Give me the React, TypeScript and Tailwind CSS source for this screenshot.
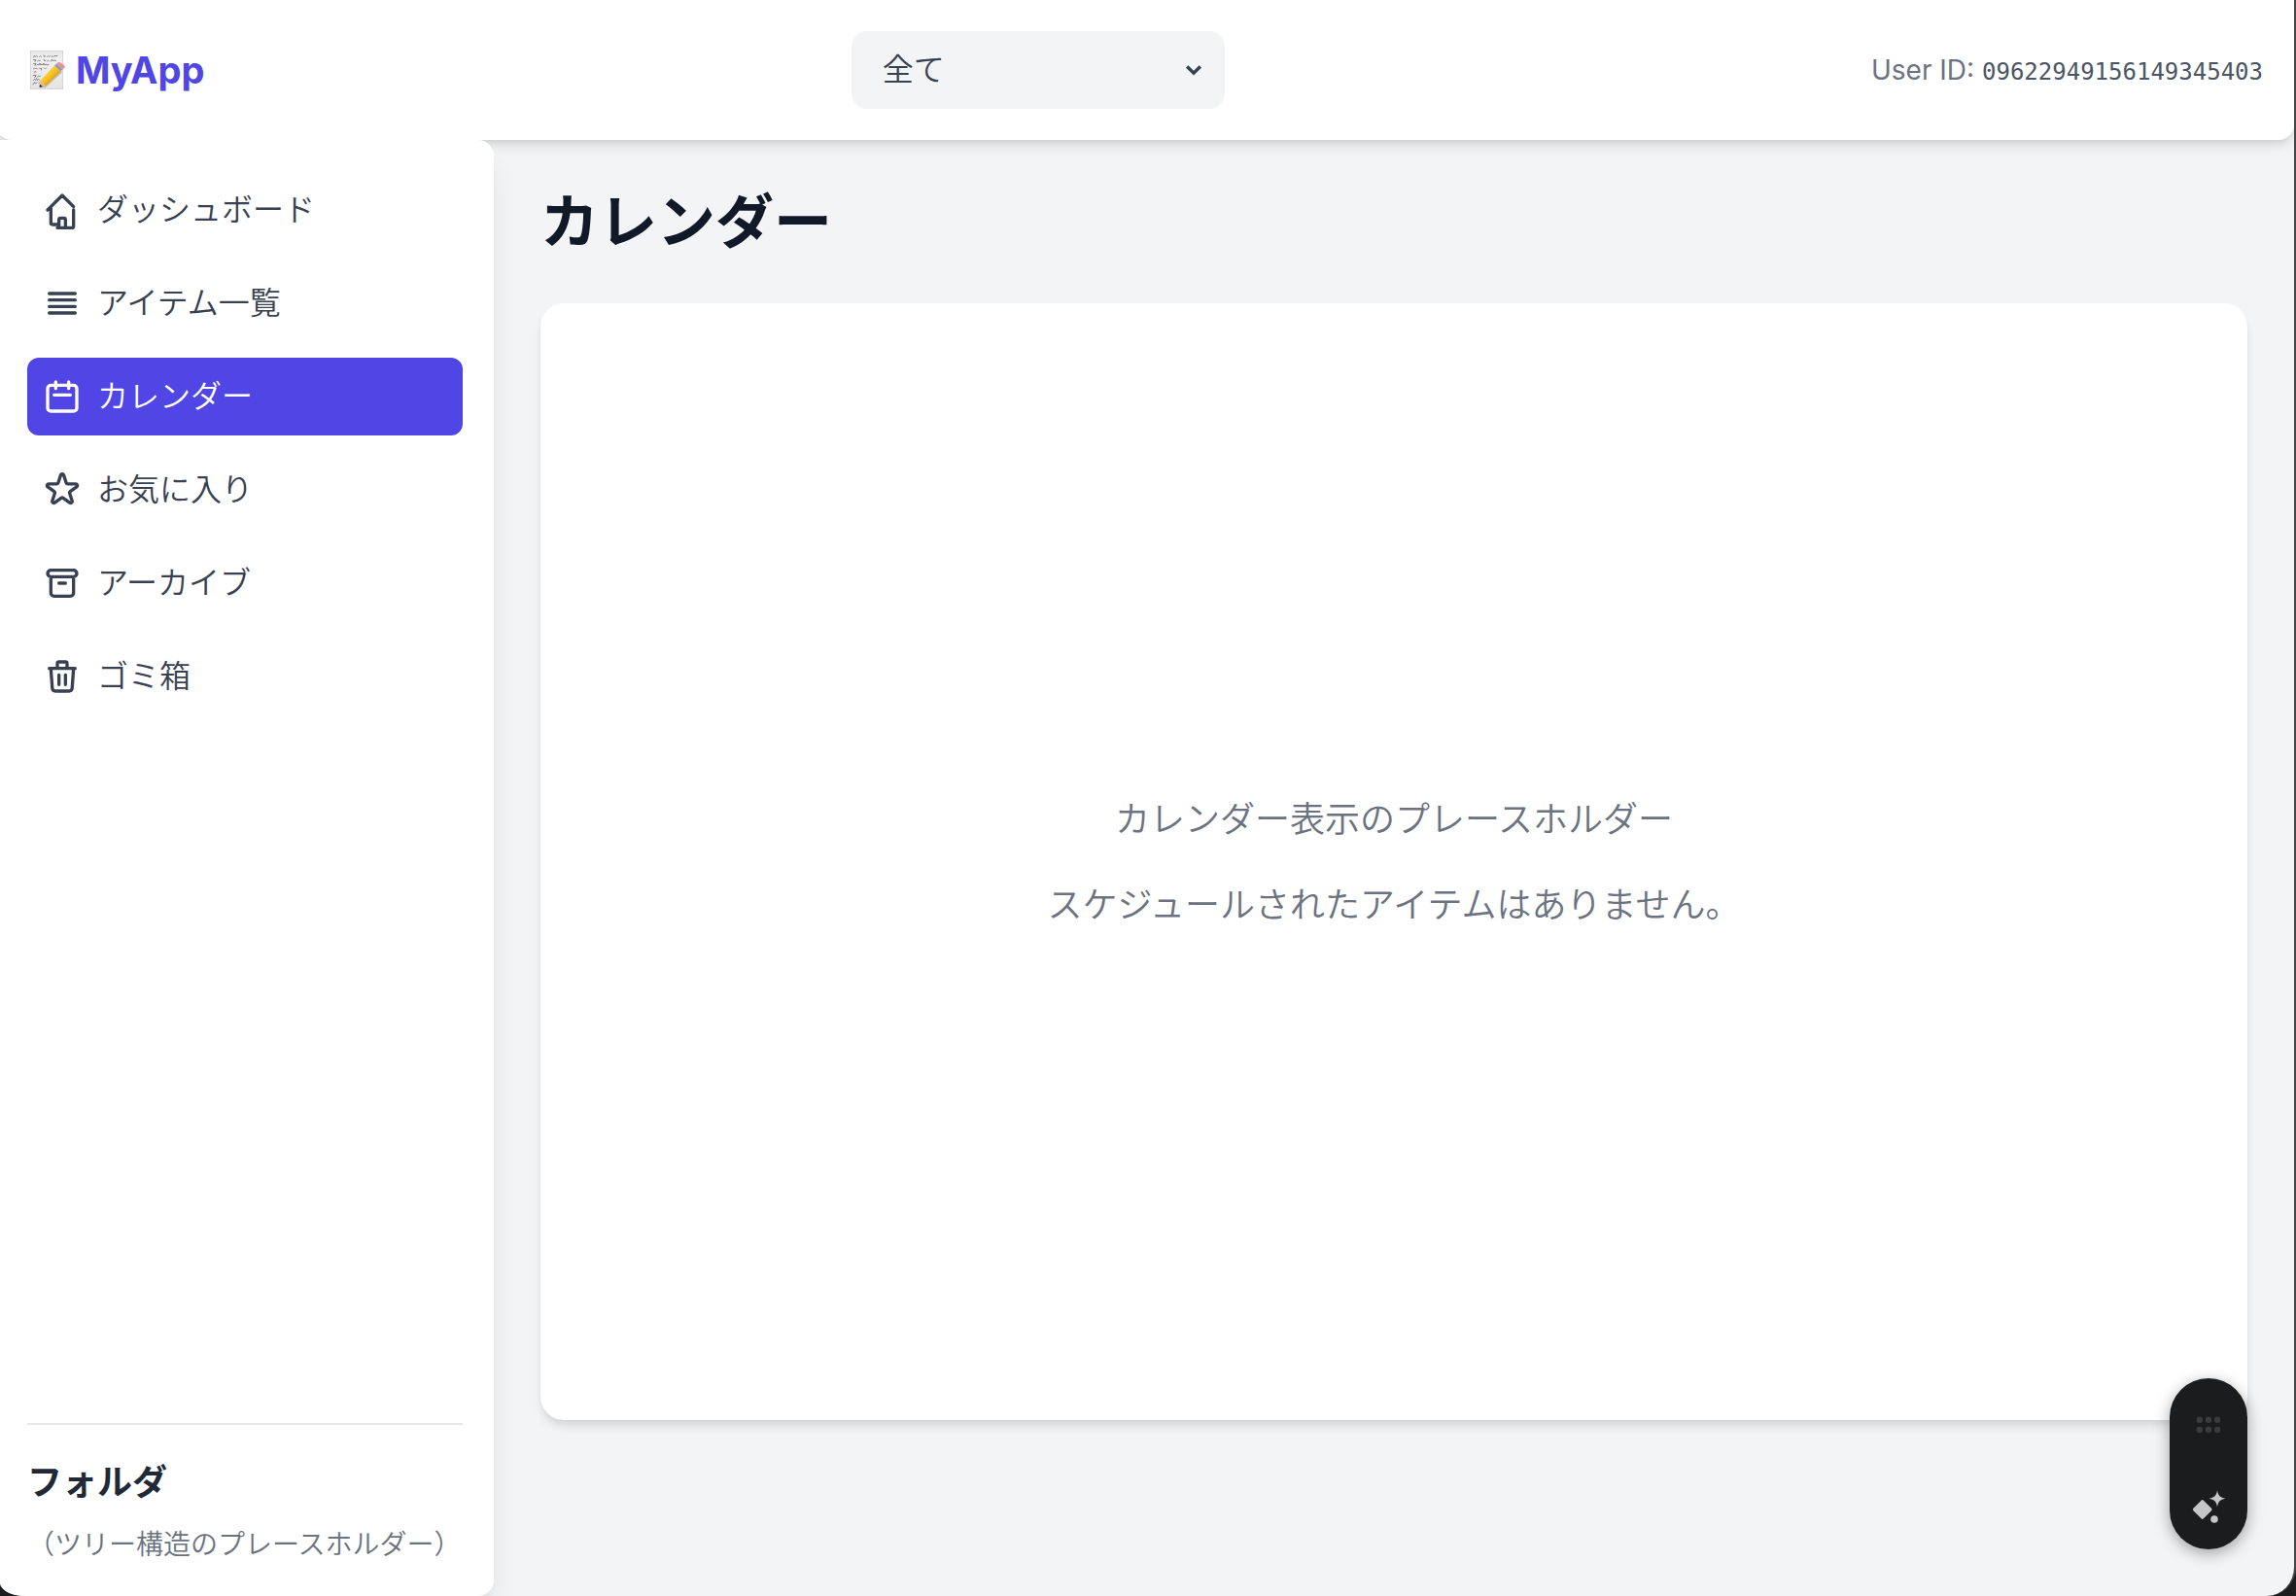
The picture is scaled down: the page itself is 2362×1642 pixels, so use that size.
import React from "react";

type NavEntry = { label: string; path: string; active?: boolean };

const NAV: NavEntry[] = [
  {
    label: "ダッシュボード",
    path: "M3 12l2-2m0 0l7-7 7 7M5 10v10a1 1 0 001 1h3M19 12v10a1 1 0 01-1 1H9M10 22.500v-4.500a1 1 0 011-1h2a1 1 0 011 1v4.500",
  },
  { label: "アイテム一覧", path: "M4 6h16M4 10h16M4 14h16M4 18h16" },
  {
    label: "カレンダー",
    active: true,
    path: "M8 7V3m8 4V3m-9 8h10M5 21h14a2 2 0 002-2V7a2 2 0 00-2-2H5a2 2 0 00-2 2v12a2 2 0 002 2z",
  },
  {
    label: "お気に入り",
    path: "M11.049 2.927c.3-.921 1.603-.921 1.902 0l1.519 4.674a1 1 0 00.95.69h4.915c.969 0 1.371 1.24.588 1.81l-3.976 2.888a1 1 0 00-.363 1.118l1.518 4.674c.3.922-.755 1.688-1.538 1.118l-3.976-2.888a1 1 0 00-1.176 0l-3.976 2.888c-.783.57-1.838-.197-1.538-1.118l1.518-4.674a1 1 0 00-.363-1.118l-3.976-2.888c-.784-.57-.38-1.81.588-1.81h4.914a1 1 0 00.951-.69l1.519-4.674z",
  },
  {
    label: "アーカイブ",
    path: "M5 8h14M5 8a2 2 0 110-4h14a2 2 0 110 4M5 8v10a2 2 0 002 2h10a2 2 0 002-2V8m-9 4h4",
  },
  {
    label: "ゴミ箱",
    path: "M19 7l-.867 12.142A2 2 0 0116.138 21H7.862a2 2 0 01-1.995-1.858L5 7m5 4v6m4-6v6m1-10V4a1 1 0 00-1-1h-4a1 1 0 00-1 1v3M4 7h16",
  },
];

function MemoIcon() {
  return (
    <svg className="size-10 shrink-0" viewBox="0 0 40 40" aria-hidden="true">
      <defs>
        <linearGradient id="paper" x1="0" y1="0" x2="0" y2="1">
          <stop offset="0" stopColor="#e6e6e6" />
          <stop offset="0.2" stopColor="#f1f1f1" />
          <stop offset="1" stopColor="#e4e4e4" />
        </linearGradient>
        <linearGradient id="barrel" x1="0" y1="0" x2="1" y2="1">
          <stop offset="0.25" stopColor="#ffdc4a" />
          <stop offset="0.55" stopColor="#f5b81c" />
          <stop offset="0.8" stopColor="#b8790d" />
        </linearGradient>
      </defs>
      <rect x="3.500" y="0.500" width="33" height="39" fill="url(#paper)" stroke="#d6d6d4" />
      <g fill="none" stroke="#77777a" strokeWidth="0.9" strokeLinecap="round">
        <path d="M6.500 7l1-2 1 1.500 1-.8 1 .6M12.500 6.500l1-1 1 1M17 5l.6 1.600 1-.8M20.500 6.500l1-1 1 1 1-1M25 6.300l1-.8 1 1 1-1 2 .2 1-.4" />
        <path d="M6.500 9.500h2.500l-1 2M10.500 11l1-1 1 1 1-1M17 9l1 2 1-1M20.500 11l1-1 1 1M24.500 11l1-2 1 2 1-1 2 .4" />
        <path d="M6.500 13.500h2.500l-1 2M10 15l1-1 1 1 1-2 1 2 1-1 1 1 1-2 1 2 1-1 1 1 2-.5" />
        <path d="M6.500 19l1-1 1 1 1-1 1 1M12.500 18l1 1 1-1v2M17.500 18l1 1 1-1M7 22.500l1-1 1 .6" />
        <path d="M6.500 25.500h2.500l-1 2M10.500 27l1-1 1 1 1-1M6.500 30.500l1-1 1 1 1-2 1 2 1-1 1 .8M6 35l1.500-2.500 1 1.500 1.500-1M12 33.500l1-1" />
      </g>
      <path d="M13.500 37.500l5 .8L36.500 22l-3-1z" fill="#8a8a8a" opacity="0.45" />
      <path d="M13.700 30.500L12.600 37.600L19.300 36.200Z" fill="#e6c08c" />
      <path d="M13 34.600L12.500 38l3.500-.8Z" fill="#2b2b2b" />
      <path d="M13.700 30.500L28 15.500L34.300 21.500L19.300 36.200C17.500 35 15 33 13.700 30.500Z" fill="url(#barrel)" />
      <path d="M28 15.500L30.500 13.200L36.500 19.200L34.300 21.500Z" fill="#8fa0ad" />
      <path d="M30.500 13.200L31.300 12.400C33.500 10.700 40 16 38.600 17.600L36.500 19.200Z" fill="#ee8f97" />
    </svg>
  );
}

function AssistantPill() {
  return (
    <div className="fixed right-[50px] bottom-12 z-30 flex h-44 w-20 flex-col items-center justify-between rounded-full bg-[#1b1c1d] py-6 shadow-[0_4px_16px_rgba(0,0,0,0.35)]">
      <button type="button" aria-label="移動">
        <svg className="size-12" viewBox="0 0 48 48" fill="#3a3b3c" aria-hidden="true">
          <circle cx="14.800" cy="18.700" r="3.200" />
          <circle cx="24" cy="18.700" r="3.200" />
          <circle cx="33.100" cy="18.700" r="3.200" />
          <circle cx="14.800" cy="29" r="3.200" />
          <circle cx="24" cy="29" r="3.200" />
          <circle cx="33.100" cy="29" r="3.200" />
        </svg>
      </button>
      <button type="button" aria-label="アシスタント">
        <svg className="size-12" viewBox="0 0 48 48" fill="#c4c7c5" aria-hidden="true">
          <path d="M16.500 21.700q1.200-1.200 2.400 0l8.100 8.100q1.200 1.200 0 2.400l-8.100 8.100q-1.200 1.200-2.400 0l-8.100-8.100q-1.200-1.200 0-2.400z" />
          <path d="M33 11.300c.9 5.400 3 7.500 8.500 8.500-5.500 1-7.600 3.100-8.500 8.500-.9-5.400-3-7.500-8.500-8.500 5.500-1 7.600-3.100 8.500-8.500z" />
          <circle cx="30" cy="41" r="3.800" />
        </svg>
      </button>
    </div>
  );
}

export default function App() {
  return (
    <div className="min-h-screen bg-[#1c1d1e] font-['Inter','Noto_Sans_CJK_JP',sans-serif]">
      <div className="flex min-h-screen flex-col overflow-hidden rounded-br-[30px] rounded-bl-[26px_14px] border-r-2 border-[#454746] bg-[#f3f4f6]">
        <header className="z-10 -ml-1 flex h-36 items-center justify-between rounded-b-2xl bg-white px-8 shadow-[0_8px_12px_-2px_rgba(0,0,0,0.1),0_4px_8px_-4px_rgba(0,0,0,0.1)]">
          <div className="flex items-center gap-2.5 text-[38px] font-bold text-[#4f46e5]">
            <MemoIcon />
            <span>MyApp</span>
          </div>
          <div className="relative w-96">
            <select
              aria-label="フィルター"
              className="h-20 w-full appearance-none rounded-2xl bg-[#f3f4f6] px-8 text-[32px] font-[350] text-[#374151]"
            >
              <option>全て</option>
            </select>
            <svg className="pointer-events-none absolute top-8 right-6 size-4" viewBox="0 0 16 16" fill="none" stroke="#374151" strokeWidth="3.400" aria-hidden="true">
              <path d="M1.200 4.500L8 11.200L14.800 4.500" />
            </svg>
          </div>
          <div className="text-[28px] text-[#6b7280]">
            User ID: <span className="font-['DejaVu_Sans_Mono',monospace] text-2xl text-[#4b5563]">09622949156149345403</span>
          </div>
        </header>
        <div className="flex grow">
          <aside className="z-20 flex w-[508px] shrink-0 flex-col justify-between rounded-r-2xl bg-white py-8 pr-8 pl-7 shadow-[0_20px_30px_-6px_rgba(0,0,0,0.1),0_8px_12px_-8px_rgba(0,0,0,0.1)]">
            <nav className="flex flex-col gap-4">
              {NAV.map((n) => (
                <button
                  key={n.label}
                  type="button"
                  className={
                    n.active
                      ? "flex h-20 items-center gap-4 rounded-xl bg-[#4f46e5] px-4 text-[32px] font-[350] text-white"
                      : "flex h-20 items-center gap-4 rounded-xl px-4 text-[32px] font-[350] text-[#374151]"
                  }
                >
                  <svg className="size-10 overflow-visible" viewBox="0 0 24 24" fill="none" stroke="currentColor" strokeWidth="2" strokeLinecap="round" strokeLinejoin="round" aria-hidden="true">
                    <path d={n.path} />
                  </svg>
                  <span>{n.label}</span>
                </button>
              ))}
            </nav>
            <section className="border-t-2 border-[#e5e7eb] pt-8">
              <h2 className="mb-4 text-[36px] font-semibold text-[#1f2937]">フォルダ</h2>
              <p className="text-[28px] font-[350] text-[#6b7280]">（ツリー構造のプレースホルダー）</p>
            </section>
          </aside>
          <main className="grow p-12">
            <h1 className="text-[60px] leading-[72px] font-bold text-[#111827]">カレンダー</h1>
            <section className="mt-12 flex h-[70vh] flex-col items-center justify-center gap-8 rounded-3xl bg-white text-[36px] leading-[56px] font-[350] text-[#6b7280] shadow-[0_8px_12px_-2px_rgba(0,0,0,0.1),0_4px_8px_-4px_rgba(0,0,0,0.1)]">
              <p>カレンダー表示のプレースホルダー</p>
              <p>スケジュールされたアイテムはありません。</p>
            </section>
          </main>
        </div>
      </div>
      <AssistantPill />
    </div>
  );
}
